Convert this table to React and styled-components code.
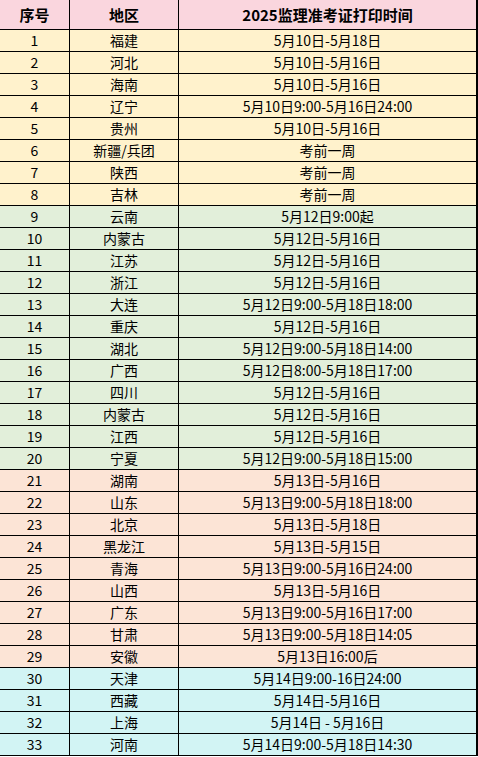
import React from "react";
import styled, { createGlobalStyle } from "styled-components";

const GlobalStyle = createGlobalStyle`
  html, body {
    margin: 0;
    padding: 0;
    background: #ffffff;
  }
  body {
    font-family: "Noto Sans CJK SC", "Noto Sans", sans-serif;
    color: #000;
  }
`;

//Row colours by group
const colors = {
  head: "#fad6de",
  yellow: "#fff2cc",
  green: "#e2efda",
  peach: "#fce4d6",
  cyan: "#d2f4f4",
};

const rows = [
  ["福建", "5月10日-5月18日"],
  ["河北", "5月10日-5月16日"],
  ["海南", "5月10日-5月16日"],
  ["辽宁", "5月10日9:00-5月16日24:00"],
  ["贵州", "5月10日-5月16日"],
  ["新疆/兵团", "考前一周"],
  ["陕西", "考前一周"],
  ["吉林", "考前一周"],
  ["云南", "5月12日9:00起"],
  ["内蒙古", "5月12日-5月16日"],
  ["江苏", "5月12日-5月16日"],
  ["浙江", "5月12日-5月16日"],
  ["大连", "5月12日9:00-5月18日18:00"],
  ["重庆", "5月12日-5月16日"],
  ["湖北", "5月12日9:00-5月18日14:00"],
  ["广西", "5月12日8:00-5月18日17:00"],
  ["四川", "5月12日-5月16日"],
  ["内蒙古", "5月12日-5月16日"],
  ["江西", "5月12日-5月16日"],
  ["宁夏", "5月12日9:00-5月18日15:00"],
  ["湖南", "5月13日-5月16日"],
  ["山东", "5月13日9:00-5月18日18:00"],
  ["北京", "5月13日-5月18日"],
  ["黑龙江", "5月13日-5月15日"],
  ["青海", "5月13日9:00-5月16日24:00"],
  ["山西", "5月13日-5月16日"],
  ["广东", "5月13日9:00-5月16日17:00"],
  ["甘肃", "5月13日9:00-5月18日14:05"],
  ["安徽", "5月13日16:00后"],
  ["天津", "5月14日9:00-16日24:00"],
  ["西藏", "5月14日-5月16日"],
  ["上海", "5月14日 - 5月16日"],
  ["河南", "5月14日9:00-5月18日14:30"],
];

const groupOf = (i) => {
  if (i < 8) return "yellow";
  if (i < 20) return "green";
  if (i < 29) return "peach";
  return "cyan";
};

const App = () => {
  return (
    <>
      <GlobalStyle />
      <Sheet>
        <Row $bg={colors.head} $head>
          <Cell $w={70}>序号</Cell>
          <Cell $w={109}>地区</Cell>
          <Cell $w={299} $last>
            2025监理准考证打印时间
          </Cell>
        </Row>
        {rows.map(([area, time], i) => (
          <Row key={i} $bg={colors[groupOf(i)]}>
            <Cell $w={70}>{i + 1}</Cell>
            <Cell $w={109}>{area}</Cell>
            <Cell $w={299} $last>
              {time}
            </Cell>
          </Row>
        ))}
      </Sheet>
    </>
  );
};

const Sheet = styled.div`
  width: 478px;
  display: flex;
  flex-direction: column;
`;

const Row = styled.div`
  display: flex;
  height: ${(p) => (p.$head ? 30 : 22)}px;
  background: ${(p) => p.$bg};
  font-size: ${(p) => (p.$head ? 15 : 14)}px;
  font-weight: ${(p) => (p.$head ? 700 : 400)};
`;

const Cell = styled.div`
  box-sizing: border-box;
  width: ${(p) => p.$w}px;
  flex: none;
  display: flex;
  align-items: center;
  justify-content: center;
  white-space: nowrap;
  line-height: 1;
  border-bottom: 1px solid #000;
  border-right: ${(p) => (p.$last ? 2 : 1)}px solid #000;
  padding-bottom: 1px;
`;

export default App;
